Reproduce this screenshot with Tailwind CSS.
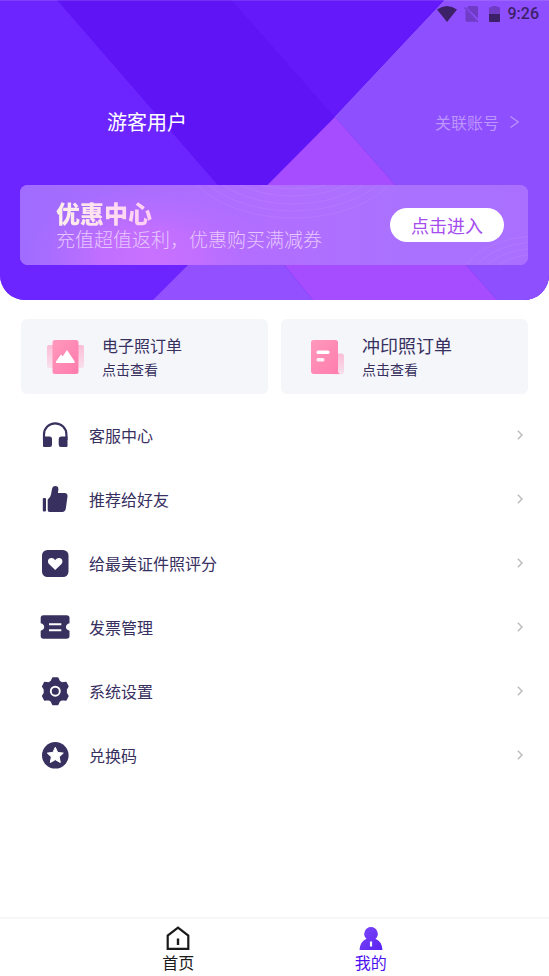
<!DOCTYPE html>
<html lang="zh-CN">
<head>
<meta charset="utf-8">
<meta name="viewport" content="width=device-width, initial-scale=1">
<title>我的</title>
<script src="https://cdn.jsdelivr.net/npm/@tailwindcss/browser@4"></script>
</head>
<body class="flex min-h-screen flex-col bg-white font-['Noto_Sans_CJK_SC',sans-serif] text-[#38305f]">

<header class="relative overflow-hidden rounded-b-[25px] bg-[#6d25ff] pb-[35px]">
  <svg class="absolute inset-0 h-full w-full" viewBox="0 0 549 300" preserveAspectRatio="none" aria-hidden="true">
    <rect width="549" height="300" fill="#6d25ff"/>
    <path d="M57 0H232L335 117L267 185L241 212Z" fill="#5f14f5"/>
    <path d="M232 0H445L335 117Z" fill="#6419fb"/>
    <path d="M445 0L335 117L497 300H549V0Z" fill="#8e4fff"/>
    <path d="M335 117L241 212L313 300H497Z" fill="#a64dff"/>
    <path d="M241 212L153 300H313Z" fill="#9350ff"/>
    <path d="M445 0L335 117" stroke="#a06cff" stroke-opacity=".6" fill="none"/>
    <path d="M0 .5H549" stroke="#fff" stroke-opacity=".12"/>
  </svg>

  <div class="relative flex h-7 items-center justify-end pr-[10px] text-[#3c2169]">
    <svg class="mr-[7px] h-4 w-5" viewBox="0 0 20 16" aria-hidden="true"><path d="M10 16L0 3.500Q10-3.500 20 3.500Z" fill="currentColor"/></svg>
    <svg class="mr-[10px] h-[18px] w-[15px]" viewBox="0 0 15 18" aria-hidden="true"><path d="M4.500 1H12.500Q14 1 14 2.500V13.500L3 3ZM1.500 5L13 16.800H3Q1.500 16.800 1.500 15.500Z" fill="#703cc6"/><path d="M.5 2.500L14 17" stroke="#703cc6" stroke-width="1.400"/></svg>
    <svg class="mr-2 h-[18px] w-[11px]" viewBox="0 0 11 18" aria-hidden="true"><path d="M3 1H8V2H10Q11 2 11 3V9H0V3Q0 2 1 2H3Z" fill="#703cc6"/><path d="M0 9H11V16Q11 17 10 17H1Q0 17 0 16Z" fill="#3c2169"/></svg>
    <time class="font-['Roboto',sans-serif] text-[16px] leading-5 font-medium">9:26</time>
  </div>

  <div class="relative mt-20 flex h-7 items-center justify-between pr-[30px] pl-[107px]">
    <h1 class="text-[20px] leading-7 text-white">游客用户</h1>
    <a href="#" class="flex items-center gap-[11px] text-[16px] leading-6 text-[#bd95ff]">关联账号
      <svg class="h-3 w-[9px]" viewBox="0 0 9 12" aria-hidden="true"><path d="M.5 .5L8.300 6L.5 11.500" fill="none" stroke="currentColor" stroke-width="1.200"/></svg>
    </a>
  </div>

  <section class="relative mx-5 mt-[49px] mr-[21px] flex h-20 items-center justify-between overflow-hidden rounded-[8px] bg-[#aa71ff] pr-6 pl-9">
    <svg class="absolute inset-0 h-full w-full" viewBox="0 0 508 80" preserveAspectRatio="none" aria-hidden="true">
      <defs>
        <linearGradient id="base"><stop stop-color="#a06cff"/><stop offset=".5" stop-color="#b16eff"/><stop offset=".75" stop-color="#aa71ff"/><stop offset="1" stop-color="#aa6fff"/></linearGradient>
        <radialGradient id="glow"><stop stop-color="#c971ff"/><stop offset=".4" stop-color="#c56fff" stop-opacity=".85"/><stop offset="1" stop-color="#b56eff" stop-opacity="0"/></radialGradient>
      </defs>
      <rect width="508" height="80" fill="url(#base)"/>
      <ellipse cx="130" cy="72" rx="125" ry="75" fill="url(#glow)"/>
      <g fill="none" stroke="#fff" stroke-opacity=".07">
        <ellipse cx="273" cy="-35" rx="112" ry="68"/><ellipse cx="273" cy="-35" rx="103" ry="61"/><ellipse cx="273" cy="-35" rx="92" ry="54"/><ellipse cx="273" cy="-35" rx="82" ry="46"/><ellipse cx="273" cy="-35" rx="72" ry="39"/>
        <ellipse cx="520" cy="95" rx="78" ry="44"/><ellipse cx="520" cy="95" rx="69" ry="38"/><ellipse cx="520" cy="95" rx="60" ry="32"/><ellipse cx="520" cy="95" rx="50" ry="26"/>
      </g>
    </svg>
    <div class="relative">
      <h2 class="w-fit bg-linear-to-r from-[#fdf0e8] to-[#ffcdf6] bg-clip-text text-[24px] leading-7 font-black text-transparent">优惠中心</h2>
      <p class="text-[19px] leading-6 font-light text-[#e7c6ff]">充值超值返利，优惠购买满减券</p>
    </div>
    <button type="button" class="relative h-[34px] w-[114px] rounded-full bg-white text-[18px] leading-6 text-[#a64df0]">点击进入</button>
  </section>
</header>

<main class="grow">
  <div class="grid grid-cols-2 gap-[13px] px-[21px] pt-[19px]">
    <a href="#" class="flex h-[75px] items-center gap-[17px] rounded-[6px] bg-[#f4f6fa] pl-6">
      <svg class="h-9 w-10 shrink-0" viewBox="0 0 40 36" aria-hidden="true">
        <defs>
          <linearGradient id="pink" x1="0" y1="0" x2="1" y2="1"><stop stop-color="#ff98bd"/><stop offset="1" stop-color="#ff7cab"/></linearGradient>
          <linearGradient id="fade" x1="0" y1="0" x2="0" y2="1"><stop stop-color="#fbbcd5"/><stop offset="1" stop-color="#f8e0ec"/></linearGradient>
        </defs>
        <rect x="2" y="6" width="37" height="23" rx="2" fill="url(#fade)"/>
        <rect x="7.500" y="1" width="26" height="34" rx="2.500" fill="url(#pink)"/>
        <path d="M11 22.500L16 15.500L17.800 17.200L22 11L29.700 22.500Q30.300 24 28.500 24H12Q10.300 24 11 22.500Z" fill="#fff"/>
      </svg>
      <span><strong class="block text-[16px] leading-6 font-normal">电子照订单</strong><span class="block text-[14px] leading-6">点击查看</span></span>
    </a>
    <a href="#" class="flex h-[75px] items-center gap-[17px] rounded-[6px] bg-[#f4f6fa] pl-6">
      <svg class="h-9 w-10 shrink-0" viewBox="0 0 40 36" aria-hidden="true">
        <rect x="26" y="14.500" width="13" height="21" rx="3" fill="url(#fade)"/>
        <path d="M8.500 1H30.500Q33 1 33 3.500V32Q33 35 35.500 35H9Q6 35 6 32V3.500Q6 1 8.500 1Z" fill="url(#pink)"/>
        <rect x="11.500" y="11.500" width="13" height="3.500" rx="1.500" fill="#fff"/>
        <rect x="11.500" y="19" width="8" height="3.500" rx="1.500" fill="#fff" opacity=".85"/>
      </svg>
      <span><strong class="block text-[18px] leading-6 font-normal">冲印照订单</strong><span class="block text-[14px] leading-6">点击查看</span></span>
    </a>
  </div>

  <ul class="pt-[9px] text-[16px] leading-6">
    <li><a href="#" class="flex h-16 items-center gap-[19px] pr-[26px] pl-10">
      <svg class="h-[30px] w-[30px]" viewBox="0 0 30 30" fill="currentColor" aria-hidden="true"><path d="M4 20V14.500A11.200 11.200 0 0 1 26.400 14.500V20" fill="none" stroke="currentColor" stroke-width="2.200"/><path d="M3 16.500H9.500Q12 16.500 12 19V24.500Q12 27 9.500 27H4Q3 27 3 26ZM27.500 16.500H21Q18.700 16.500 18.700 19V24.500Q18.700 27 21 27H26.500Q27.500 27 27.500 26Z"/></svg>
      <span class="grow">客服中心</span>
      <svg class="h-[10px] w-[6px] text-[#bcbcbc]" viewBox="0 0 6 10" aria-hidden="true"><path d="M.8 .8L5 5L.8 9.200" fill="none" stroke="currentColor" stroke-width="1.500"/></svg></a></li>
    <li><a href="#" class="flex h-16 items-center gap-[19px] pr-[26px] pl-10">
      <svg class="h-[30px] w-[30px]" viewBox="0 0 30 30" fill="currentColor" aria-hidden="true"><rect x="2.800" y="14" width="3.200" height="13.500" rx="1"/><path d="M7.700 15.500Q10.500 13.500 11 10.500L12 5Q12.500 2 15.300 2Q18.500 2 18.400 5.500L17.900 9H24.500Q27.800 9 27.500 12.500L25.800 24.500Q25.300 27.900 22.300 27.900H9.500Q7.700 27.900 7.700 26Z"/></svg>
      <span class="grow">推荐给好友</span>
      <svg class="h-[10px] w-[6px] text-[#bcbcbc]" viewBox="0 0 6 10" aria-hidden="true"><path d="M.8 .8L5 5L.8 9.200" fill="none" stroke="currentColor" stroke-width="1.500"/></svg></a></li>
    <li><a href="#" class="flex h-16 items-center gap-[19px] pr-[26px] pl-10">
      <svg class="h-[30px] w-[30px]" viewBox="0 0 30 30" fill="currentColor" aria-hidden="true"><rect x="2" y="2" width="26.500" height="27" rx="5.500"/><path d="M15.200 22L9.500 16.600C6.500 13.300 8.300 9.800 11.500 9.900C13.500 10 14.600 11.200 15.200 12.200C15.800 11.200 17 10 19 9.900C22 9.800 24 13.300 21 16.600Z" fill="#fff"/></svg>
      <span class="grow">给最美证件照评分</span>
      <svg class="h-[10px] w-[6px] text-[#bcbcbc]" viewBox="0 0 6 10" aria-hidden="true"><path d="M.8 .8L5 5L.8 9.200" fill="none" stroke="currentColor" stroke-width="1.500"/></svg></a></li>
    <li><a href="#" class="flex h-16 items-center gap-[19px] pr-[26px] pl-10">
      <svg class="h-[30px] w-[30px]" viewBox="0 0 30 30" fill="currentColor" aria-hidden="true"><path d="M3.500 3.200H26.500Q29.500 3.200 29.500 6V11.300C24.800 12.300 24.800 17.700 29.500 18.700V24Q29.500 26.800 26.500 26.800H3.500Q.7 26.800 .7 24V18.700C5.400 17.700 5.400 12.300 .7 11.300V6Q.7 3.200 3.500 3.200Z"/><path d="M9 12.200H21.300M9 18.200H21.300" stroke="#fff" stroke-width="2"/></svg>
      <span class="grow">发票管理</span>
      <svg class="h-[10px] w-[6px] text-[#bcbcbc]" viewBox="0 0 6 10" aria-hidden="true"><path d="M.8 .8L5 5L.8 9.200" fill="none" stroke="currentColor" stroke-width="1.500"/></svg></a></li>
    <li><a href="#" class="flex h-16 items-center gap-[19px] pr-[26px] pl-10">
      <svg class="h-[30px] w-[30px]" viewBox="0 0 30 30" fill="currentColor" aria-hidden="true"><path d="M12.800 2H17.800L19.300 5.400L22.200 7L26 6.500L28 10.500L26.200 13.500V17L28 20L26 24L22.200 23.500L19.300 25.100L17.800 28.500H12.800L11.300 25.100L8.400 23.500L4.600 24L2.600 20L4.400 17V13.500L2.600 10.500L4.600 6.500L8.400 7L11.300 5.400Z" stroke="currentColor" stroke-width="1.400" stroke-linejoin="round"/><circle cx="15.300" cy="15.200" r="4.500" fill="none" stroke="#fff" stroke-width="1.900"/></svg>
      <span class="grow">系统设置</span>
      <svg class="h-[10px] w-[6px] text-[#bcbcbc]" viewBox="0 0 6 10" aria-hidden="true"><path d="M.8 .8L5 5L.8 9.200" fill="none" stroke="currentColor" stroke-width="1.500"/></svg></a></li>
    <li><a href="#" class="flex h-16 items-center gap-[19px] pr-[26px] pl-10">
      <svg class="h-[30px] w-[30px]" viewBox="0 0 30 30" fill="currentColor" aria-hidden="true"><circle cx="15.300" cy="15.300" r="13.300"/><path d="M15.300 7.300L17.700 12.400L23.300 13.100L19.200 16.900L20.300 22.500L15.300 19.700L10.300 22.500L11.400 16.900L7.300 13.100L12.900 12.400Z" fill="#fff" stroke="#fff" stroke-linejoin="round"/></svg>
      <span class="grow">兑换码</span>
      <svg class="h-[10px] w-[6px] text-[#bcbcbc]" viewBox="0 0 6 10" aria-hidden="true"><path d="M.8 .8L5 5L.8 9.200" fill="none" stroke="currentColor" stroke-width="1.500"/></svg></a></li>
  </ul>
</main>

<nav class="sticky bottom-0 grid grid-cols-2 border-t-2 border-[#f6f6f6] bg-white px-[82px] pt-[7px] pb-[2px] text-[16px] leading-6">
  <a href="#" class="flex flex-col items-center text-[#1a1a1a]">
    <svg class="h-6 w-6" viewBox="0 0 24 24" aria-hidden="true"><path d="M1.700 22.800V9.500L12 1.700L22.300 9.500V22.800Z" fill="none" stroke="currentColor" stroke-width="2.200"/><path d="M12 12.500V19" stroke="currentColor" stroke-width="2.400"/></svg>
    首页
  </a>
  <a href="#" aria-current="page" class="flex flex-col items-center text-[#4d12f0]">
    <svg class="h-6 w-6" viewBox="0 0 24 24" aria-hidden="true"><defs><linearGradient id="me" x1="0" x2="1" y1="0" y2="1"><stop stop-color="#7c48fb"/><stop offset="1" stop-color="#5a22ef"/></linearGradient></defs><path d="M12 1A6.800 6.800 0 0 1 16.500 12.800Q23 15.500 23.500 24H.5Q1 15.500 7.500 12.800A6.800 6.800 0 0 1 12 1Z" fill="url(#me)"/><path d="M12 15.500V20.500" stroke="#fff" stroke-width="2.200"/></svg>
    我的
  </a>
</nav>
</body>
</html>
